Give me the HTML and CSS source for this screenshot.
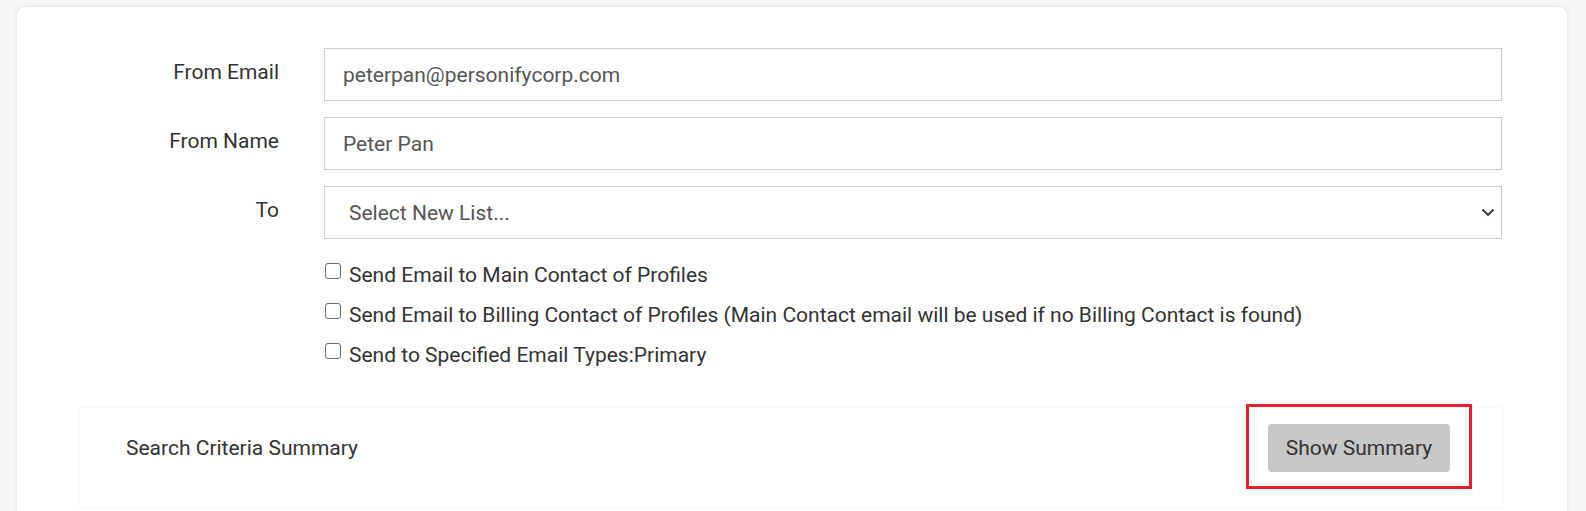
FILE: index.html
```html
<!DOCTYPE html>
<html lang="en">
<head>
<meta charset="utf-8">
<title>Send Email</title>
<link rel="stylesheet" href="styles.css">
</head>
<body>
<div class="card">
  <div class="form-row">
    <label class="form-label" for="fromEmail">From Email</label>
    <input class="form-control" id="fromEmail" type="text" value="peterpan@personifycorp.com">
  </div>
  <div class="form-row">
    <label class="form-label" for="fromName">From Name</label>
    <input class="form-control" id="fromName" type="text" value="Peter Pan">
  </div>
  <div class="form-row">
    <label class="form-label" for="toList">To</label>
    <div class="select-wrap">
      <select class="form-control select" id="toList">
        <option>Select New List...</option>
      </select>
      <svg class="chevron" viewBox="0 0 16 16" width="16" height="16" aria-hidden="true"><path d="M2.5 5.5 L8 11 L13.5 5.5" fill="none" stroke="#444" stroke-width="2.2"/></svg>
    </div>
  </div>
  <div class="checks">
    <label class="check"><span class="box"></span>Send Email to Main Contact of Profiles</label>
    <label class="check"><span class="box"></span>Send Email to Billing Contact of Profiles (Main Contact email will be used if no Billing Contact is found)</label>
    <label class="check"><span class="box"></span>Send to Specified Email Types:Primary</label>
  </div>
  <div class="summary">
    <span class="summary-title">Search Criteria Summary</span>
    <div class="btn-wrap">
      <button class="btn" type="button">Show Summary</button>
      <span class="highlight"></span>
    </div>
  </div>
</div>
</body>
</html>
```
FILE: styles.css
```css
* { box-sizing: border-box; }
html, body { margin: 0; padding: 0; }
body {
  background: #f7f7f7;
  font-family: Roboto, "Liberation Sans", sans-serif;
  color: #333;
  height: 511px;
  overflow: hidden;
  padding: 7px 19px 0 17px;
}
.card {
  background: #fff;
  border-radius: 8px;
  box-shadow: 0 0 4px rgba(0,0,0,0.12);
  padding: 41px 65px 0 0;
  height: 520px;
}
.form-row {
  display: grid;
  grid-template-columns: 262px 1fr;
  column-gap: 45px;
  margin-bottom: 16px;
}
.form-label {
  text-align: right;
  font-size: 21px;
  padding-top: 12px;
  color: #333;
}
.form-control {
  display: block;
  width: 100%;
  height: 53px;
  border: 1px solid #ccc;
  background: #fff;
  font-family: Roboto, "Liberation Sans", sans-serif;
  font-size: 21px;
  color: #555;
  padding: 0 18px;
  border-radius: 0;
  outline: none;
}
.select-wrap { position: relative; }
.select {
  appearance: none;
  -webkit-appearance: none;
  padding-left: 24px;
}
.chevron {
  position: absolute;
  right: 6px;
  top: 18px;
}
.checks {
  margin: 0 0 0 307px;
  display: flex;
  flex-direction: column;
}
.check {
  display: flex;
  align-items: center;
  height: 40px;
  font-size: 21px;
  color: #333;
}
.box {
  width: 16px;
  height: 16px;
  border: 1px solid #6b6b6b;
  border-radius: 3px;
  margin: 0 8px 8px 1px;
  flex: none;
}
.summary {
  margin: 33px 0 0 63px;
  height: 99px;
  display: flex;
  align-items: flex-start;
  justify-content: space-between;
  box-shadow: 0 0 3px rgba(0,0,0,0.08);
  padding: 16px 52px 0 46px;
}
.summary-title {
  font-size: 21px;
  color: #333;
  line-height: 48px;
}
.btn-wrap { position: relative; }
.btn {
  display: block;
  width: 182px;
  height: 48px;
  background: #c8c8c8;
  border: none;
  border-radius: 4px;
  font-family: Roboto, "Liberation Sans", sans-serif;
  font-size: 21px;
  color: #333;
}
.highlight {
  position: absolute;
  left: -22px;
  top: -20px;
  width: 226px;
  height: 85px;
  border: 3px solid #e8202a;
}
```
